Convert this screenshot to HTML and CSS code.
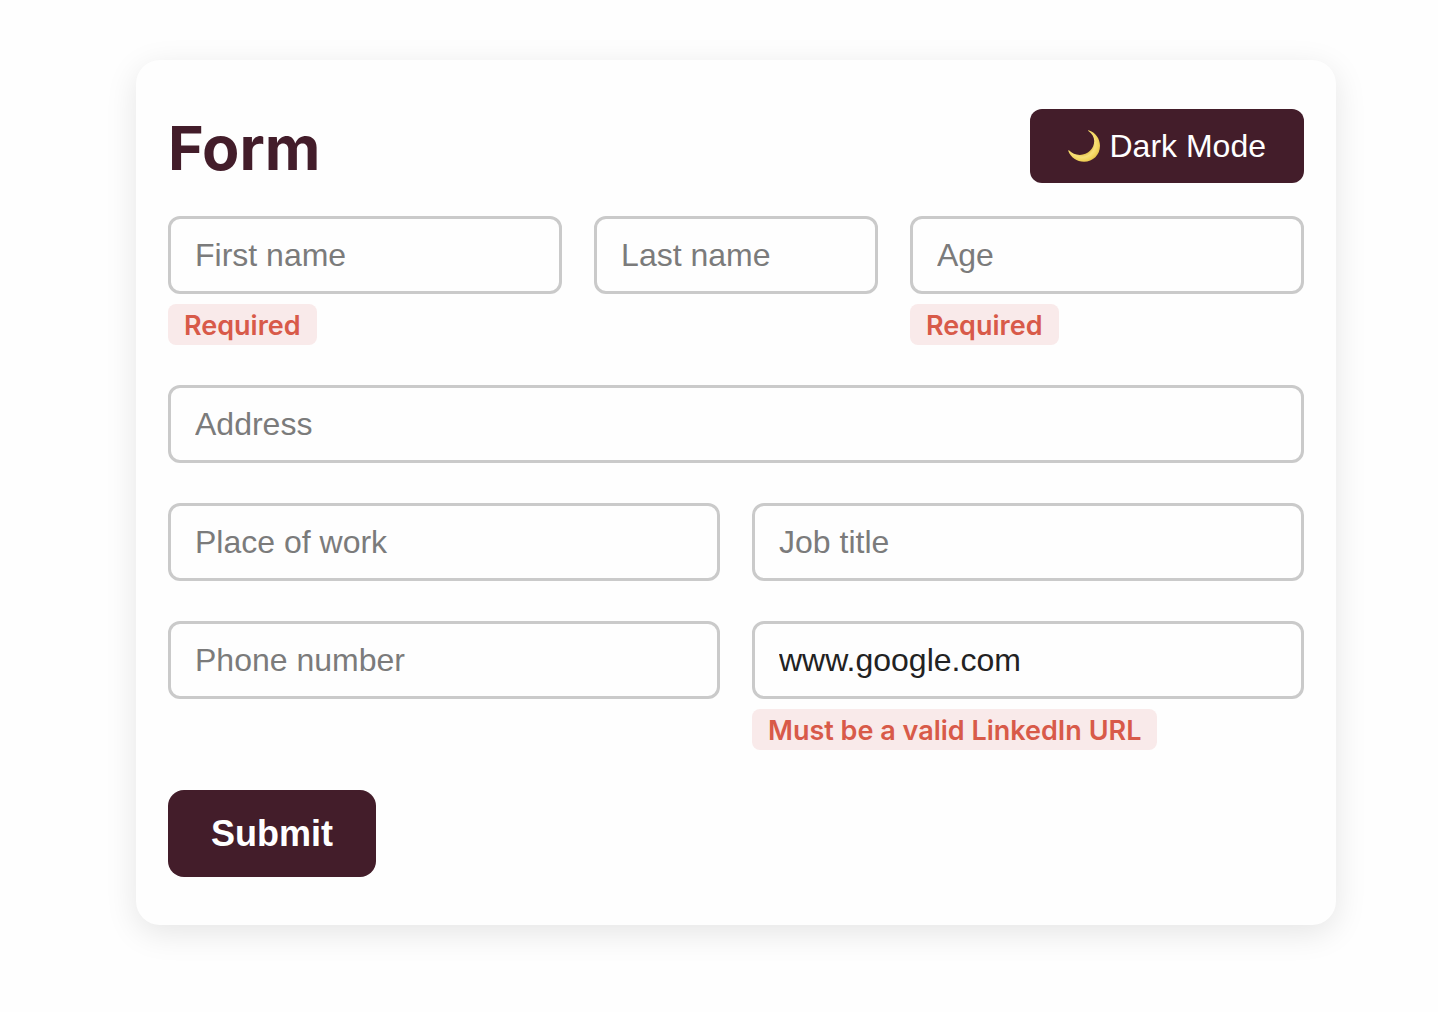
FILE: index.html
```html
<!DOCTYPE html>
<html lang="en">
<head>
  <meta charset="utf-8">
  <meta name="viewport" content="width=device-width, initial-scale=1">
  <title>Form</title>
  <link rel="stylesheet" href="styles.css">
</head>
<body>
  <main class="card">
    <header class="card-header">
      <h1 class="title">Form</h1>
      <button class="theme-toggle" type="button">
        <svg class="moon" viewBox="0 0 32 32" aria-hidden="true">
          <defs>
            <radialGradient id="moon-fill" gradientUnits="userSpaceOnUse" cx="14" cy="14" r="20">
              <stop offset="0.5" stop-color="#e3c04a"/>
              <stop offset="0.66" stop-color="#f8e07a"/>
              <stop offset="0.82" stop-color="#f2d45c"/>
              <stop offset="1" stop-color="#dcb845"/>
            </radialGradient>
          </defs>
          <path fill="url(#moon-fill)" d="M20.500 0.200C27.500 2.400 32 8.600 32 15.800C32 25 25 31.800 16 31.800C9 31.800 2.600 27.600 0.200 20.800C0.100 20.200 0.800 20 1.200 20.500C3.800 23.200 7.600 24.900 11.800 24.900C19.800 24.900 26.200 18.600 26.200 11C26.200 7 24 3.700 20.700 1.200C20 0.700 19.900 0.100 20.500 0.200Z"/>
        </svg>
        <span>Dark Mode</span>
      </button>
    </header>

    <form class="form" novalidate>
      <div class="row row-three">
        <div class="field">
          <input class="input" type="text" name="firstName" placeholder="First name" aria-label="First name" aria-describedby="first-error">
          <span class="error" id="first-error">Required</span>
        </div>
        <div class="field">
          <input class="input" type="text" name="lastName" placeholder="Last name" aria-label="Last name">
        </div>
        <div class="field">
          <input class="input" type="text" name="age" placeholder="Age" aria-label="Age" aria-describedby="age-error">
          <span class="error" id="age-error">Required</span>
        </div>
      </div>
      <div class="row">
        <div class="field">
          <input class="input" type="text" name="address" placeholder="Address" aria-label="Address">
        </div>
      </div>
      <div class="row row-two">
        <div class="field">
          <input class="input" type="text" name="work" placeholder="Place of work" aria-label="Place of work">
        </div>
        <div class="field">
          <input class="input" type="text" name="job" placeholder="Job title" aria-label="Job title">
        </div>
      </div>
      <div class="row row-two">
        <div class="field">
          <input class="input" type="tel" name="phone" placeholder="Phone number" aria-label="Phone number">
        </div>
        <div class="field">
          <input class="input" type="url" name="linkedin" value="www.google.com" aria-label="LinkedIn URL" aria-describedby="url-error">
          <span class="error" id="url-error">Must be a valid LinkedIn URL</span>
        </div>
      </div>
      <button class="submit" type="submit">Submit</button>
    </form>
  </main>
</body>
</html>
```
FILE: styles.css
```css
* {
  box-sizing: border-box;
}

body {
  margin: 0;
  padding: 60px 102px 60px 136px;
  background: #fefefe;
  font-family: Inter, sans-serif;
}

.card {
  max-width: 1200px;
  padding: 49px 32px 48px;
  border-radius: 24px;
  background: #fefefe;
  box-shadow: 0 8px 32px rgba(0, 0, 0, 0.1);
}

.card-header {
  display: flex;
  align-items: flex-start;
  justify-content: space-between;
  margin-bottom: 29px;
}

.title {
  margin: 0;
  color: #431d2a;
  font-size: 61px;
  font-weight: 700;
  line-height: 78px;
}

.theme-toggle,
.submit {
  border: 0;
  background: #431d2a;
  color: #fff;
  font-family: "Liberation Sans", Arial, sans-serif;
  cursor: pointer;
}

.theme-toggle {
  display: flex;
  align-items: center;
  gap: 10px;
  padding: 18px 38px;
  border-radius: 12px;
  font-size: 32px;
  line-height: 38px;
}

.moon {
  width: 32px;
  height: 32px;
}

.form {
  display: flex;
  flex-direction: column;
  align-items: flex-start;
  gap: 40px;
}

.row {
  display: grid;
  gap: 32px;
  width: 100%;
}

.row-two {
  grid-template-columns: 1fr 1fr;
}

.row-three {
  grid-template-columns: 25fr 18fr 25fr;
}

.field {
  display: flex;
  flex-direction: column;
  align-items: flex-start;
  gap: 10px;
  min-width: 0;
}

.input {
  width: 100%;
  height: 78px;
  padding: 0 24px;
  border: 3px solid #cacaca;
  border-radius: 12px;
  background: #fefefe;
  color: #222;
  font-family: "Liberation Sans", Arial, sans-serif;
  font-size: 32px;
}

.input::placeholder {
  color: #7b7b7b;
}

.error {
  padding: 2px 16px 0;
  border-radius: 8px;
  background: #f9eaea;
  color: #d85a49;
  font-size: 27px;
  font-weight: 600;
  line-height: 39px;
}

.submit {
  padding: 0 43px;
  border-radius: 16px;
  font-size: 36px;
  font-weight: 700;
  line-height: 87px;
}
```
